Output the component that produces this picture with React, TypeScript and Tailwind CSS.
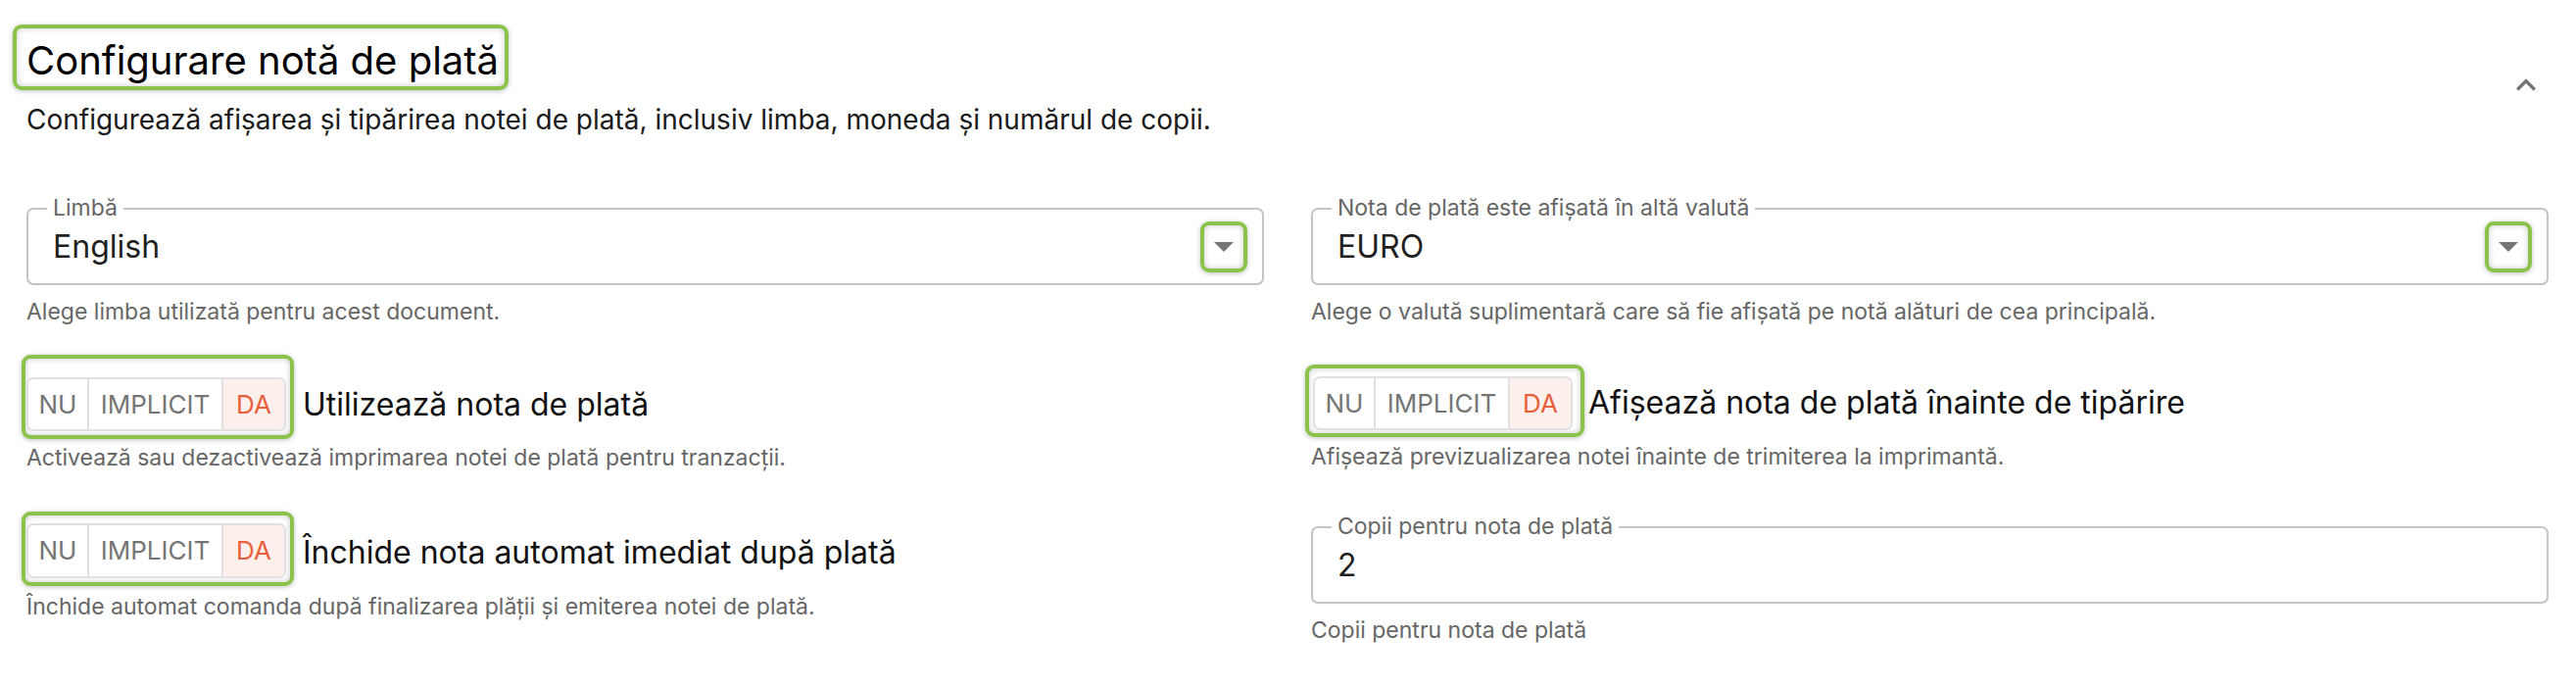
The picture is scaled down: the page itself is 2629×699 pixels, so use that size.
import React from "react";

const GREEN =
  "border-[4px] border-[#8bc34a] rounded-[9px] shadow-[inset_0_0_6px_rgba(0,0,0,0.22),0_1px_5px_rgba(0,0,0,0.25)]";

function ToggleGroup({ h = "h-[55px]" }: { h?: string }) {
  return (
    <div
      className={`flex ${h} rounded-[7px] border-2 border-[#e0e0e0] overflow-hidden text-[26px] leading-none bg-white`}
    >
      <div className="w-[62px] flex items-center justify-center text-[#757575] border-r-2 border-[#e0e0e0]">
        NU
      </div>
      <div className="w-[137px] flex items-center justify-center text-[#757575] border-r-2 border-[#e0e0e0]">
        IMPLICIT
      </div>
      <div className="w-[62px] flex items-center justify-center bg-[#fdf0ec] text-[#e8603a]">
        DA
      </div>
    </div>
  );
}

function Helper({ children, mt }: { children: React.ReactNode; mt: string }) {
  return (
    <p className={`${mt} text-[23px] leading-[27px] text-[#666666] whitespace-nowrap`}>
      {children}
    </p>
  );
}

function Field({
  label,
  value,
  arrow,
}: {
  label: string;
  value: string;
  arrow?: boolean;
}) {
  return (
    <div className="relative h-[79px] rounded-[7px] border-2 border-[#c4c4c4] flex items-center pl-[25px] pr-[15px]">
      <span className="absolute left-[19px] -top-[15px] bg-white px-[6px] text-[23px] leading-[26px] text-[#666666] whitespace-nowrap">
        {label}
      </span>
      <span className="flex-1 text-[32px] leading-[38px] text-[#1f1f1f]">{value}</span>
      {arrow && (
        <div className={`${GREEN} w-[48px] h-[52px] flex items-center justify-center`}>
          <svg width="20" height="10" viewBox="0 0 20 10">
            <path d="M0 0H20L10 10Z" fill="#757575" />
          </svg>
        </div>
      )}
    </div>
  );
}

function ToggleLabel({ children, ml, mb = "mb-[16px]" }: { children: React.ReactNode; ml: string; mb?: string }) {
  return (
    <span className={`${ml} ${mb} text-[32px] leading-[38px] text-[#111111] whitespace-nowrap`}>
      {children}
    </span>
  );
}

export default function App() {
  return (
    <div className="w-[2629px] h-[699px] overflow-hidden bg-white pl-[27px] pr-[28px] pt-[25px] font-['Inter','Noto_Sans',sans-serif]">
      <div className="flex items-start justify-between">
        <div className={`${GREEN} -ml-[14px] pl-[10px] pr-[6px] pt-[10px] pb-[3px]`}>
          <h1 className="text-[40px] leading-[46px] text-black font-normal whitespace-nowrap">
            Configurare notă de plată
          </h1>
        </div>
        <svg
          className="mt-[42px] mr-[3px]"
          width="40"
          height="40"
          viewBox="0 0 24 24"
        >
          <path d="M12 8l-6 6 1.41 1.41L12 10.83l4.59 4.58L18 14z" fill="#757575" />
        </svg>
      </div>
      <p className="-mt-[2px] text-[28px] leading-[34px] text-[#1a1a1a] whitespace-nowrap">
        Configurează afișarea și tipărirea notei de plată, inclusiv limba, moneda și numărul de copii.
      </p>

      <div className="mt-[73px] grid grid-cols-2 gap-x-[48px]">
        {/* Row 1 */}
        <div>
          <Field label="Limbă" value="English" arrow />
          <Helper mt="mt-[14px]">Alege limba utilizată pentru acest document.</Helper>
        </div>
        <div>
          <Field label="Nota de plată este afișată în altă valută" value="EURO" arrow />
          <Helper mt="mt-[14px]">
            Alege o valută suplimentară care să fie afișată pe notă alături de cea principală.
          </Helper>
        </div>

        {/* Row 2 */}
        <div className="mt-[30px]">
          <div className="flex items-end -ml-[5px]">
            <div className={`${GREEN} pt-[19px] pb-[4px] pl-[1px] pr-[4px]`}>
              <ToggleGroup />
            </div>
            <ToggleLabel ml="ml-[9px]">Utilizează nota de plată</ToggleLabel>
          </div>
          <Helper mt="mt-[6px]">
            Activează sau dezactivează imprimarea notei de plată pentru tranzacții.
          </Helper>
        </div>
        <div className="mt-[40px]">
          <div className="flex items-end -ml-[6px]">
            <div className={`${GREEN} pt-[8px] pb-[3px] pl-[4px] pr-[8px]`}>
              <ToggleGroup />
            </div>
            <ToggleLabel ml="ml-[4px]">Afișează nota de plată înainte de tipărire</ToggleLabel>
          </div>
          <Helper mt="mt-[7px]">
            Afișează previzualizarea notei înainte de trimiterea la imprimantă.
          </Helper>
        </div>

        {/* Row 3 */}
        <div className="mt-[41px]">
          <div className="flex items-end -ml-[5px]">
            <div className={`${GREEN} pt-[8px] pb-[4px] pl-[1px] pr-[4px]`}>
              <ToggleGroup h="h-[56px]" />
            </div>
            <ToggleLabel ml="ml-[9px]" mb="mb-[15px]">
              Închide nota automat imediat după plată
            </ToggleLabel>
          </div>
          <Helper mt="mt-[8px]">
            Închide automat comanda după finalizarea plății și emiterea notei de plată.
          </Helper>
        </div>
        <div className="mt-[56px]">
          <Field label="Copii pentru nota de plată" value="2" />
          <Helper mt="mt-[14px]">Copii pentru nota de plată</Helper>
        </div>
      </div>
    </div>
  );
}
